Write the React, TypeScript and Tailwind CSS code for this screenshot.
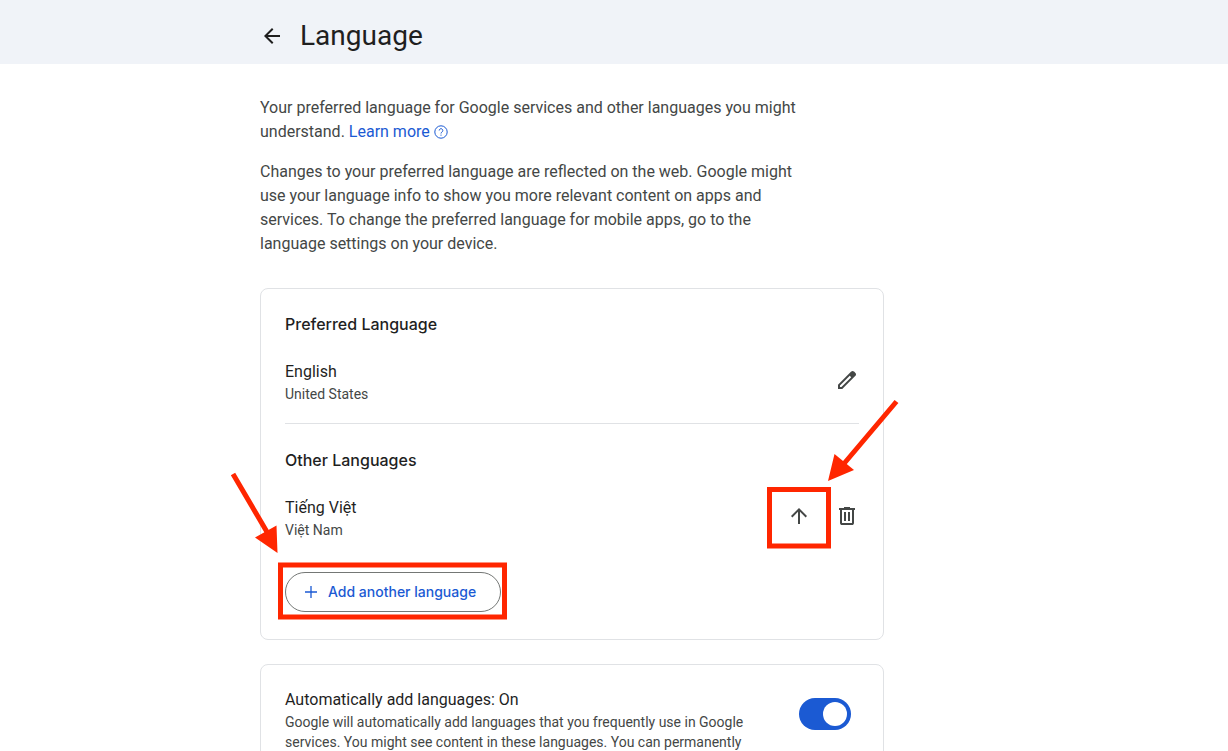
import React from "react";

const ICONS = {
  back: "m313-440 224 224-57 56-320-320 320-320 57 56-224 224h487v80H313Z",
  up: "M440-160v-487L216-423l-56-57 320-320 320 320-56 57-224-224v487h-80Z",
  edit: "M200-200h57l391-391-57-57-391 391v57Zm-80 80v-170l528-527q12-11 26.5-17t30.5-6q16 0 31 6t26 18l55 56q12 11 17.5 26t5.5 30q0 16-5.5 30.5T817-647L290-120H120Z",
  trash:
    "M280-120q-33 0-56.5-23.5T200-200v-520h-40v-80h200v-40h240v40h200v80h-40v520q0 33-23.5 56.5T680-120H280Zm400-600H280v520h400v-520ZM360-280h80v-360h-80v360Zm160 0h80v-360h-80v360Z",
  plus: "M445-445H160v-70h285v-285h70v285h285v70H515v285h-70v-285Z",
};

export default function App() {
  return (
    <div className="h-screen overflow-hidden bg-white font-[Roboto,'Noto_Sans',sans-serif] text-base text-[#444746]">
      <header className="bg-[#f0f3f8]">
        <div className="mx-auto flex h-16 max-w-[708px] items-center gap-4 pt-2">
          <button type="button" aria-label="Back" className="text-[#1f1f1f]">
            <Icon path={ICONS.back} className="size-6" />
          </button>
          <h1 className="text-[28px] leading-9 text-[#1f1f1f]">Language</h1>
        </div>
      </header>

      <main className="mx-auto max-w-[708px] pt-8 pr-21">
        <div className="flex max-w-[560px] flex-col gap-4">
          <p>
            Your preferred language for Google services and other languages you
            might understand.{" "}
            <a href="#learn" className="text-[#1b5ad3]">
              Learn more
              <HelpIcon />
            </a>
          </p>
          <p>
            Changes to your preferred language are reflected on the web. Google
            might use your language info to show you more relevant content on
            apps and services. To change the preferred language for mobile
            apps, go to the language settings on your device.
          </p>
        </div>

        <div className="relative mt-8">
          <section className="rounded-lg border border-[#e0e2e5] px-6 pt-[23px] pb-[27px]">
            <CardHeading>Preferred Language</CardHeading>
            <LanguageRow name="English" region="United States">
              <IconButton label="Edit English" path={ICONS.edit} />
            </LanguageRow>
            <hr className="mt-[11px] mb-6 border-[#e0e2e5]" />
            <CardHeading>Other Languages</CardHeading>
            <LanguageRow name="Tiếng Việt" region="Việt Nam">
              <IconButton label="Make preferred" path={ICONS.up} />
              <IconButton label="Remove Tiếng Việt" path={ICONS.trash} />
            </LanguageRow>
            <button
              type="button"
              className="mt-6 flex h-10 items-center gap-2 rounded-full border border-[#747775] pr-6 pl-4 font-[Inter,sans-serif] text-sm font-medium text-[#1b5ad3]"
            >
              <Icon path={ICONS.plus} className="size-[18px]" />
              Add another language
            </button>
          </section>
          <Annotations />
        </div>

        <section className="mt-6 flex items-start justify-between rounded-lg border border-[#e0e2e5] px-6 py-[23px]">
          <div className="max-w-[480px]">
            <label htmlFor="auto-add" className="block text-[#1f1f1f]">
              Automatically add languages: On
            </label>
            <p className="text-sm">
              Google will automatically add languages that you frequently use in
              Google services. You might see content in these languages. You can
              permanently
            </p>
          </div>
          <input
            id="auto-add"
            type="checkbox"
            role="switch"
            defaultChecked
            className="relative mt-2.5 mr-2 h-8 w-13 shrink-0 appearance-none rounded-full bg-[#747775] before:absolute before:top-1 before:left-1 before:size-6 before:rounded-full before:bg-white checked:bg-[#1b5ad3] checked:before:left-6"
          />
        </section>
      </main>
    </div>
  );
}

function CardHeading({ children }: { children: React.ReactNode }) {
  return (
    <h2 className="font-[Inter,sans-serif] font-medium text-[#1f1f1f]">
      {children}
    </h2>
  );
}

function Icon({ path, className }: { path: string; className: string }) {
  return (
    <svg
      viewBox="0 -960 960 960"
      fill="currentColor"
      aria-hidden="true"
      className={className}
    >
      <path d={path} />
    </svg>
  );
}

function HelpIcon() {
  return (
    <svg
      viewBox="0 0 14 14"
      fill="none"
      stroke="currentColor"
      aria-hidden="true"
      className="ml-1 inline size-3.5 align-[-2px]"
    >
      <circle cx="7" cy="7" r="6.2" />
      <path d="M5.2 5.5a1.8 1.8 0 1 1 2.8 1.5c-.7.5-1 .8-1 1.5M7 9.6v1.1" />
    </svg>
  );
}

function IconButton({ label, path }: { label: string; path: string }) {
  return (
    <button
      type="button"
      aria-label={label}
      className="flex size-12 items-center justify-center"
    >
      <Icon path={path} className="size-6" />
    </button>
  );
}

function LanguageRow({
  name,
  region,
  children,
}: {
  name: string;
  region: string;
  children: React.ReactNode;
}) {
  return (
    <div className="mt-3 flex items-center justify-between">
      <div className="pt-3 pb-2">
        <p className="text-[#1f1f1f]">{name}</p>
        <p className="text-sm">{region}</p>
      </div>
      <div className="-mr-3 flex">{children}</div>
    </div>
  );
}

// Red callouts over the language card
function Annotations() {
  return (
    <svg
      width="624"
      height="352"
      viewBox="0 0 624 352"
      fill="none"
      stroke="#ff2600"
      strokeWidth="5"
      aria-hidden="true"
      className="pointer-events-none absolute top-0 left-0 overflow-visible"
    >
      <rect x="509.5" y="201.5" width="59" height="56.5" />
      <rect x="20.5" y="277" width="224" height="52" />
      <path d="M636.5 113.5 582 178M-27 186 7 244" />
      <path
        d="M568 193 574.5 166 594 182ZM17.5 265-5 249.5 16.5 237.5Z"
        fill="#ff2600"
        stroke="none"
      />
    </svg>
  );
}
